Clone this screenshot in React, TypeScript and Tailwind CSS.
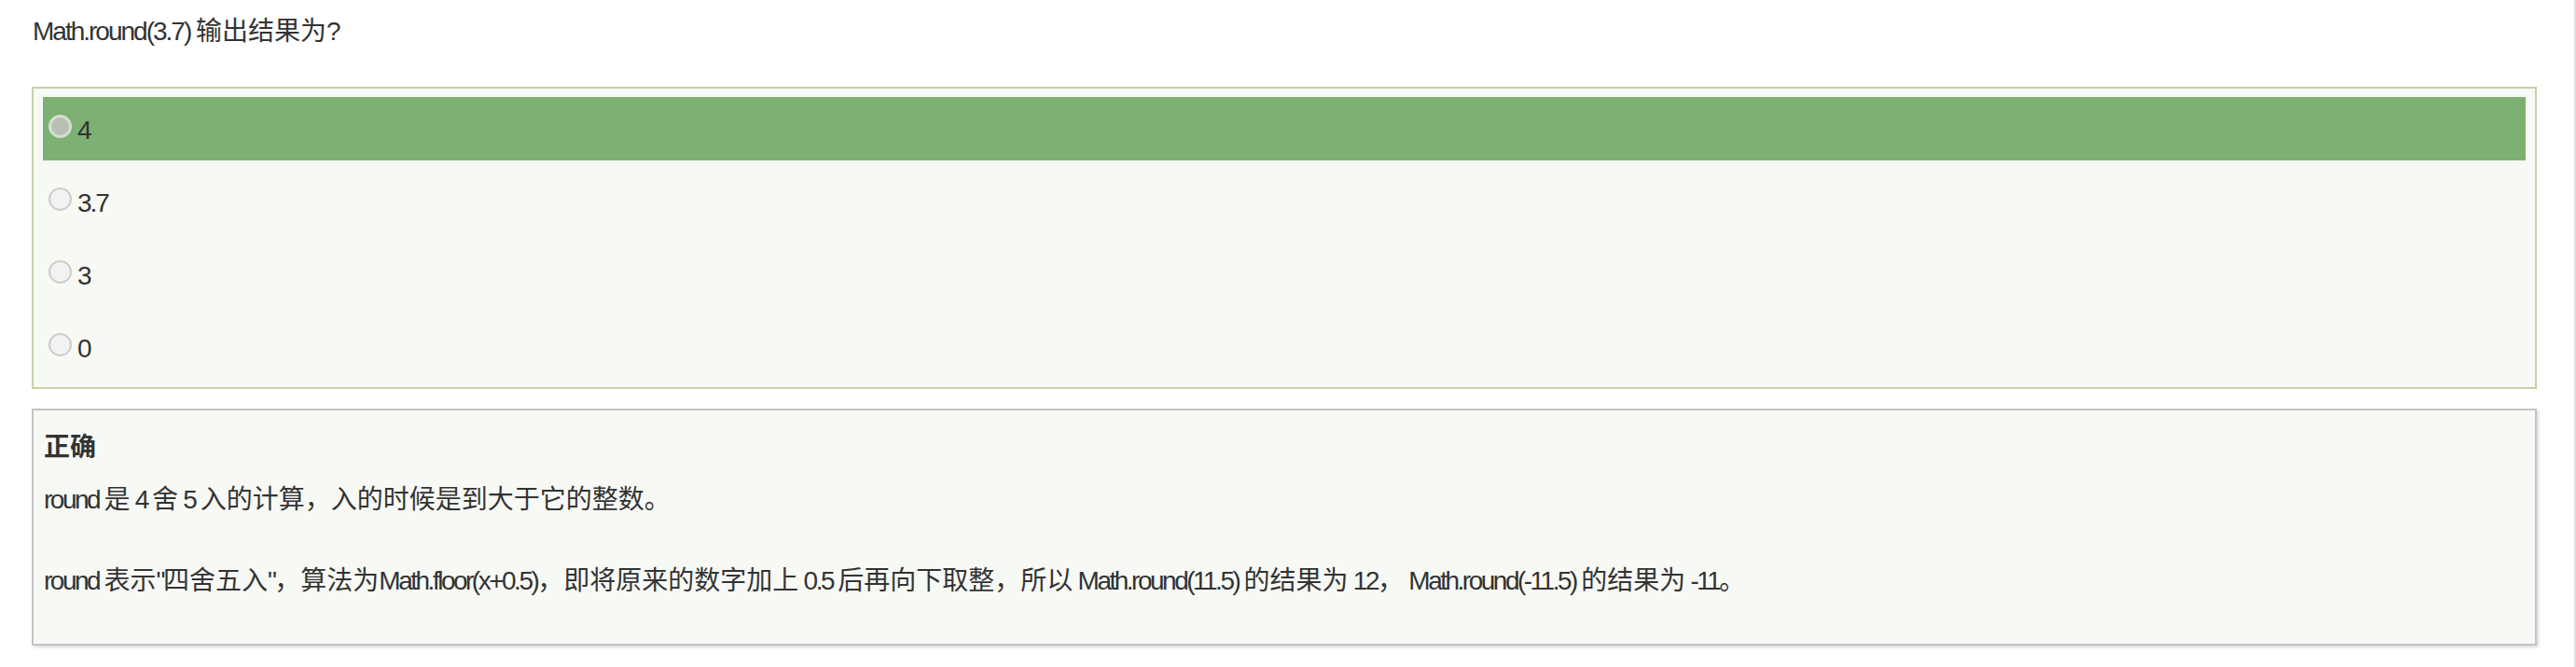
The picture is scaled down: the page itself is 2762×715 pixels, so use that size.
import React from "react";

const options = ["4", "3.7", "3", "0"];

function Mixed({ text, tight }: { text: string; tight?: boolean }) {
  const parts = text.split(/([\u0000-\u024f]+)/).filter((p) => p.length > 0);
  return (
    <>
      {parts.map((p, i) =>
        /^[\u0000-\u024f]+$/.test(p) ? (
          <span key={i} className={tight ? "tracking-[-2.5px]" : "tracking-[-2px]"}>
            {p}
          </span>
        ) : (
          <span key={i}>{p}</span>
        )
      )}
    </>
  );
}

function Radio({ checked }: { checked: boolean }) {
  return checked ? (
    <span className="mt-[19px] box-border block h-[25px] w-[25px] shrink-0 rounded-full border-[3px] border-[#d7ddd3] bg-[#b8c0b4]" />
  ) : (
    <span className="mt-[19px] box-border block h-[25px] w-[25px] shrink-0 rounded-full border-2 border-[#cdcdcd] bg-[#f2f2f2]" />
  );
}

export default function App() {
  return (
    <div className="box-border min-h-[715px] w-full border-r-2 border-[#e4e0d7] bg-white font-['Liberation_Sans','Noto_Sans_CJK_SC',sans-serif] text-[28px] leading-[40px] text-[#333]">
      <div className="ml-[34px] mr-[40px]">
        <div className="pl-px pt-[14px]">
          <Mixed text="Math.round(3.7) 输出结果为?" />
        </div>

        <div className="mt-[39px] box-border flex flex-col gap-[10px] border-2 border-[#c6d1a8] bg-[#f7f9f4] px-[10px] py-[9px]">
          {options.map((o, i) => (
            <div
              key={o}
              className={`flex h-[68px] items-start pl-[6px] ${i === 0 ? "bg-[#7db073]" : ""}`}
            >
              <Radio checked={i === 0} />
              <span className="ml-[6px] mt-[16px] tracking-[-2px]">{o}</span>
            </div>
          ))}
        </div>

        <div className="mt-[21px] box-border border-2 border-[#c4c4c4] bg-[#f7f9f5] px-[11px] pb-[47px] pt-[20px] shadow-[2px_2px_3px_rgba(0,0,0,0.15)]">
          <div className="font-bold">正确</div>
          <div className="mt-[16px]">
            <Mixed tight text="round 是 4 舍 5 入的计算，入的时候是到大于它的整数。" />
          </div>
          <div className="mt-[47px]">
            <Mixed
              tight
              text={'round 表示"四舍五入"，算法为Math.floor(x+0.5)，即将原来的数字加上 0.5 后再向下取整，所以 Math.round(11.5) 的结果为 12， Math.round(-11.5) 的结果为 -11。'}
            />
          </div>
        </div>
      </div>
    </div>
  );
}
